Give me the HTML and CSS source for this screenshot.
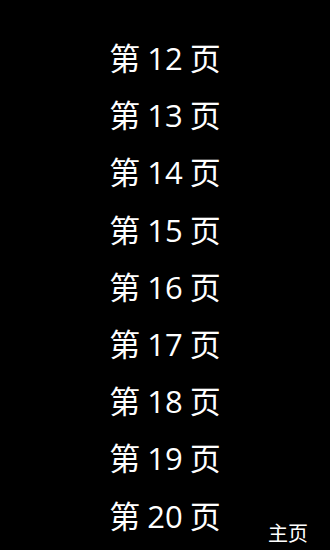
FILE: index.html
```html
<!DOCTYPE html>
<html lang="zh">
<head>
<meta charset="utf-8">
<link rel="stylesheet" href="styles.css">
</head>
<body>
<div class="page">
  <ul class="list">
    <li class="item">第 12 页</li>
    <li class="item">第 13 页</li>
    <li class="item">第 14 页</li>
    <li class="item">第 15 页</li>
    <li class="item">第 16 页</li>
    <li class="item">第 17 页</li>
    <li class="item">第 18 页</li>
    <li class="item">第 19 页</li>
    <li class="item">第 20 页</li>
  </ul>
  <div class="home">主页</div>
</div>
</body>
</html>
```

FILE: styles.css
```css
html, body {
  margin: 0;
  padding: 0;
  background: #000;
}
.page {
  position: relative;
  width: 330px;
  height: 550px;
  background: #000;
  color: #fff;
  font-family: "Open Sans", "Noto Sans CJK SC", sans-serif;
  overflow: hidden;
}
.list {
  list-style: none;
  margin: 0;
  padding: 30px 0 0;
  display: flex;
  flex-direction: column;
}
.item {
  height: 57.2px;
  display: flex;
  align-items: center;
  justify-content: center;
  font-size: 31px;
  line-height: 1;
  word-spacing: -1px;
}
.home {
  position: absolute;
  right: 22px;
  bottom: 6px;
  font-size: 20px;
  line-height: 1;
}
```
